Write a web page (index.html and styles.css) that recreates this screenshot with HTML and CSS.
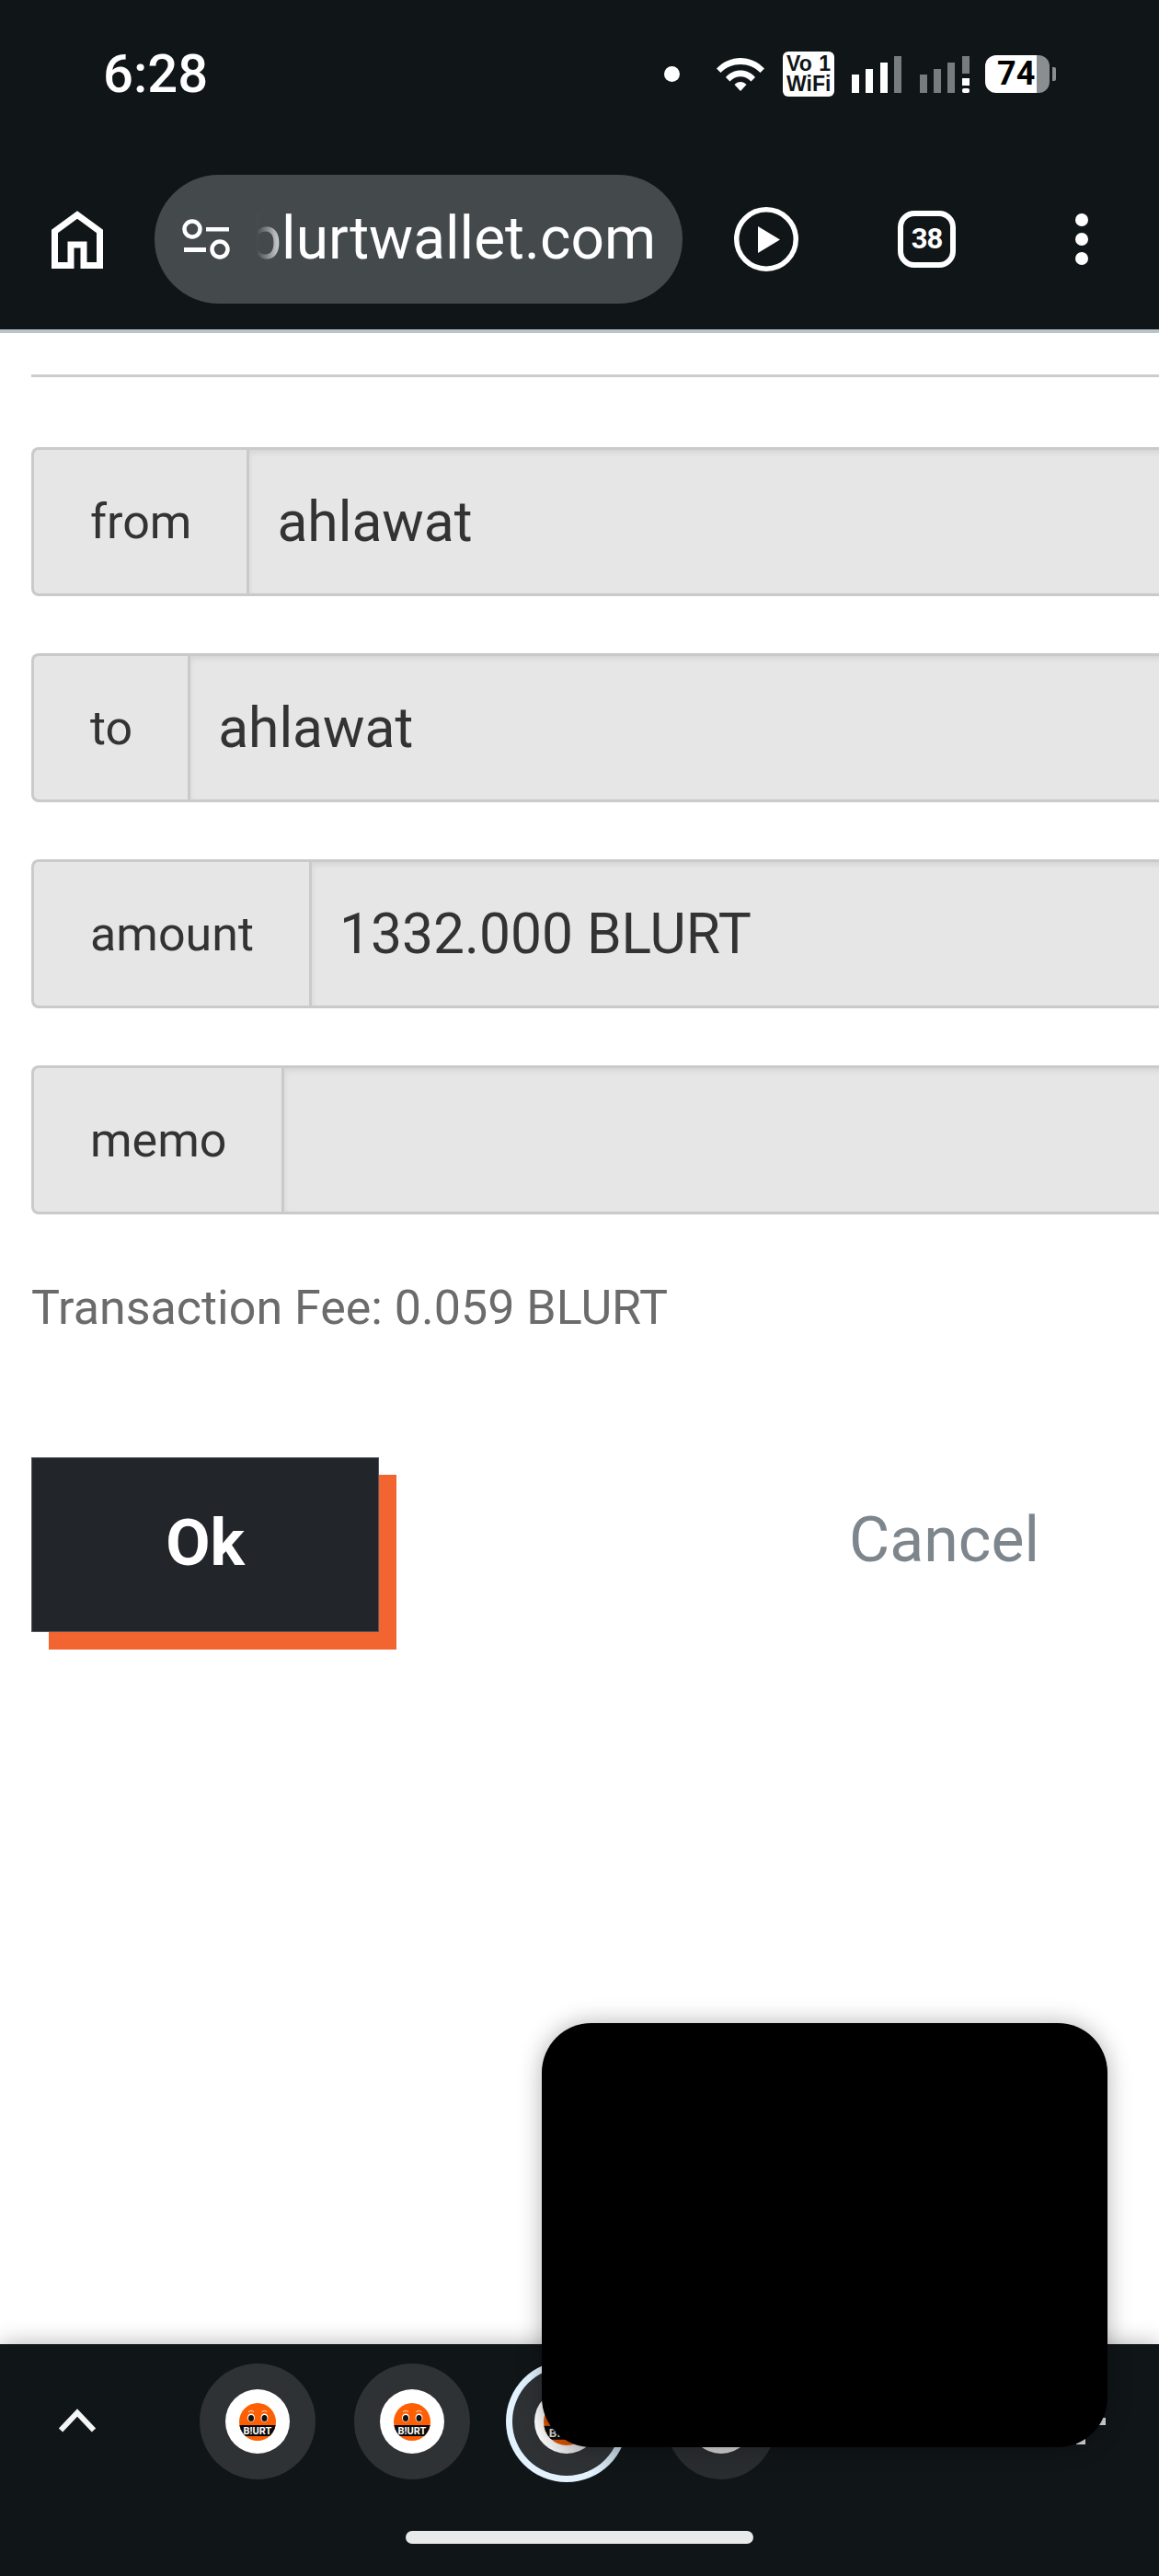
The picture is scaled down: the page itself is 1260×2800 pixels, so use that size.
FILE: index.html
```html
<!DOCTYPE html>
<html lang="en">
<head>
    <meta charset="UTF-8">
    <meta name="viewport" content="width=device-width, initial-scale=1.0">
    <title>Transfer</title>
    <link rel="stylesheet" href="styles.css">
</head>
<body>
<header class="chrome">
    <div class="status-bar">
        <span class="clock">6:28</span>
        <div class="status-icons">
            <span class="notif-dot"></span>
            <svg class="wifi" width="52" height="37" viewBox="0 0 52 37">
                <path d="M0 12.500C14-3 38-3 52 12.500L47.500 17C36 5 16 5 4.500 17Z" fill="#fff"/>
                <path d="M10 22C18 12 34 12 42 22L37.500 26.500C31 19.500 21 19.500 14.500 26.500Z" fill="#fff"/>
                <path d="M19.500 30C23 26 29 26 32.500 30L26 37Z" fill="#fff"/>
            </svg>
            <div class="vowifi">
                <div class="vowifi-top"><span>Vo</span><span>1</span></div>
                <div>WiFi</div>
            </div>
            <svg class="signal" width="54" height="40" viewBox="0 0 54 40">
                <rect x="0" y="20" width="8" height="20" fill="#fff"/>
                <rect x="15" y="14" width="8" height="26" fill="#fff"/>
                <rect x="31" y="7" width="8" height="33" fill="#fff"/>
                <rect x="46" y="0" width="8" height="40" fill="#777c7e"/>
            </svg>
            <svg class="signal-two" width="54" height="40" viewBox="0 0 54 40">
                <rect x="0" y="20" width="8" height="20" fill="#777c7e"/>
                <rect x="15" y="14" width="8" height="26" fill="#777c7e"/>
                <rect x="30" y="7" width="8" height="33" fill="#777c7e"/>
                <rect x="46" y="0" width="8" height="19" fill="#777c7e"/>
                <rect x="46" y="24" width="8" height="8" fill="#fff"/>
                <rect x="46" y="35" width="8" height="5" rx="2" fill="#fff"/>
            </svg>
            <div class="battery">
                <div class="battery-body">74</div>
                <span class="battery-nub"></span>
            </div>
        </div>
    </div>
    <div class="toolbar">
        <svg class="home-icon" width="56" height="63" viewBox="0 0 56 63">
            <path d="M3.500 59.500V22.500L28 4.500L52.500 22.500V59.500H35V37H21V59.500Z" fill="none" stroke="#fff" stroke-width="7"/>
        </svg>
        <div class="omnibox">
            <svg class="tune-icon" width="52" height="44" viewBox="0 0 52 44">
                <circle cx="11" cy="11" r="8.500" fill="none" stroke="#fff" stroke-width="4.500"/>
                <rect x="26" y="9" width="25" height="4.500" fill="#fff"/>
                <rect x="2" y="31" width="24" height="5" fill="#fff"/>
                <circle cx="41" cy="33" r="8.500" fill="none" stroke="#fff" stroke-width="4.500"/>
            </svg>
            <div class="url"><span>blurtwallet.com</span></div>
        </div>
        <svg class="play-icon" width="70" height="70" viewBox="0 0 70 70">
            <circle cx="35" cy="35" r="32.250" fill="none" stroke="#fff" stroke-width="5.500"/>
            <path d="M26 21L50 35.500L26 50Z" fill="#fff"/>
        </svg>
        <div class="tab-count">38</div>
        <div class="menu-dots"><span></span><span></span><span></span></div>
    </div>
</header>

<main class="content">
    <hr class="rule">
    <div class="input-group"><span class="group-label">from</span><input class="group-field" value="ahlawat" disabled></div>
    <div class="input-group"><span class="group-label">to</span><input class="group-field" value="ahlawat" disabled></div>
    <div class="input-group"><span class="group-label">amount</span><input class="group-field" value="1332.000 BLURT" disabled></div>
    <div class="input-group"><span class="group-label">memo</span><input class="group-field" value="" disabled></div>
    <p class="fee">Transaction Fee: 0.059 BLURT</p>
    <div class="actions">
        <button class="btn-ok">Ok</button>
        <a class="btn-cancel">Cancel</a>
    </div>
</main>

<footer class="tabs-bar">
    <div class="bubbles">
        <div class="chevron-box">
            <svg width="42" height="26" viewBox="0 0 42 26">
                <path d="M3 23.500L21 4.500L39 23.500" fill="none" stroke="#f4f5f5" stroke-width="6"/>
            </svg>
        </div>
        <div class="bubble-cell">
            <div class="bubble">
                <div class="bubble-inner">
                    <svg class="logo" width="40" height="41" viewBox="0 0 40 41">
                        <rect width="40" height="41" fill="#ff5f03"/>
                        <rect y="24" width="40" height="12" fill="#0a0a0a"/>
                        <ellipse cx="13" cy="16" rx="4" ry="4.500" fill="#fff"/>
                        <ellipse cx="27.500" cy="16" rx="4" ry="4.500" fill="#fff"/>
                        <ellipse cx="13" cy="16.500" rx="3" ry="3.500" fill="#111"/>
                        <ellipse cx="27.500" cy="16.500" rx="3" ry="3.500" fill="#111"/>
                        <path d="M10 9.500q3-2.500 6 0M24.500 9.500q3-2.500 6 0" fill="none" stroke="#ffd9bd" stroke-width="1"/>
                        <text x="20" y="34" text-anchor="middle" class="logo-text">B!URT</text>
                    </svg>
                </div>
            </div>
        </div>
        <div class="bubble-cell">
            <div class="bubble">
                <div class="bubble-inner">
                    <svg class="logo" width="40" height="41" viewBox="0 0 40 41">
                        <rect width="40" height="41" fill="#ff5f03"/>
                        <rect y="24" width="40" height="12" fill="#0a0a0a"/>
                        <ellipse cx="13" cy="16" rx="4" ry="4.500" fill="#fff"/>
                        <ellipse cx="27.500" cy="16" rx="4" ry="4.500" fill="#fff"/>
                        <ellipse cx="13" cy="16.500" rx="3" ry="3.500" fill="#111"/>
                        <ellipse cx="27.500" cy="16.500" rx="3" ry="3.500" fill="#111"/>
                        <path d="M10 9.500q3-2.500 6 0M24.500 9.500q3-2.500 6 0" fill="none" stroke="#ffd9bd" stroke-width="1"/>
                        <text x="20" y="34" text-anchor="middle" class="logo-text">B!URT</text>
                    </svg>
                </div>
            </div>
        </div>
        <div class="bubble-cell">
            <div class="bubble bubble-active">
                <div class="bubble-inner inner-faded">
                    <svg class="logo logo-big" width="50" height="51" viewBox="0 0 40 41">
                        <rect width="40" height="41" fill="#ff5f03"/>
                        <rect y="24" width="40" height="12" fill="#0a0a0a"/>
                        <text x="20" y="34" text-anchor="middle" class="logo-text">B!URT</text>
                    </svg>
                </div>
            </div>
        </div>
        <div class="bubble-cell">
            <div class="bubble bubble-last"><div class="bubble-inner inner-grey"></div></div>
        </div>
    </div>
    <div class="gesture-pill"></div>
</footer>

<span class="pip-mark mark-one"></span>
<span class="pip-mark mark-two"></span>
<div class="pip-window"></div>
</body>
</html>
```

FILE: styles.css
```css
* { box-sizing: border-box; }
html, body { margin: 0; padding: 0; }
body {
    width: 1260px;
    height: 2800px;
    overflow: hidden;
    position: relative;
    display: flex;
    flex-direction: column;
    font-family: Roboto, 'Liberation Sans', sans-serif;
    background-color: #ffffff;
}

/* Browser chrome */
.chrome { height: 362px; background-color: #101518; border-bottom: 4px solid #b9c3ca; flex-shrink: 0; }
.status-bar { height: 190px; display: flex; position: relative; color: #fff; }
.clock { margin: 47px 0 0 112px; font-size: 58px; font-weight: 500; line-height: 66px; }
.status-icons { display: flex; align-items: flex-start; margin-left: auto; padding-right: 112px; }
.notif-dot { width: 17px; height: 17px; margin-top: 72px; border-radius: 50%; background-color: #fff; }
.wifi { margin: 62px 0 0 40px; }
.vowifi {
    width: 56px;
    height: 49px;
    margin: 56px 0 0 20px;
    padding: 2px 4px 0;
    background-color: #fff;
    border-radius: 6px;
    color: #101518;
    font-family: 'Liberation Sans Narrow', 'Liberation Sans', sans-serif;
    font-size: 23px;
    font-weight: 700;
    line-height: 22px;
}
.vowifi-top { display: flex; justify-content: space-between; }
.signal { margin: 61px 0 0 19px; }
.signal-two { margin: 61px 0 0 20px; }
.battery { display: flex; align-items: center; margin: 60px 0 0 17px; }
.battery-body {
    width: 70px;
    height: 41px;
    padding-left: 13px;
    border-radius: 12px;
    background: linear-gradient(to right, #fff 56px, #8a8e90 56px);
    color: #000;
    font-family: 'Liberation Sans Narrow', Roboto, sans-serif;
    font-size: 36px;
    font-weight: 700;
    line-height: 41px;
}
.battery-nub { width: 4px; height: 15px; margin-left: 3px; border-radius: 0 2px 2px 0; background-color: #8a8e90; }

.toolbar { display: flex; align-items: center; height: 140px; position: relative; }
.home-icon { margin-left: 56px; }
.omnibox {
    width: 574px;
    height: 140px;
    margin-left: 56px;
    display: flex;
    align-items: center;
    background-color: #44494c;
    border-radius: 70px;
    color: #fff;
}
.tune-icon { margin-left: 30px; flex-shrink: 0; }
.url {
    width: 447px;
    margin-left: 16px;
    display: flex;
    justify-content: flex-end;
    white-space: nowrap;
    font-size: 64px;
    line-height: 80px;
    -webkit-mask-image: linear-gradient(to right, transparent 13px, #000 46px);
    mask-image: linear-gradient(to right, transparent 13px, #000 46px);
}
.play-icon { margin-left: 56px; }
.tab-count {
    width: 63px;
    height: 62px;
    margin-left: 108px;
    border: 6px solid #fff;
    border-radius: 18px;
    color: #fff;
    font-size: 31px;
    font-weight: 700;
    letter-spacing: -1px;
    line-height: 50px;
    text-align: center;
}
.menu-dots { display: flex; flex-direction: column; gap: 7px; margin-left: 130px; }
.menu-dots span { width: 14px; height: 14px; border-radius: 50%; background-color: #fff; }

/* Page */
.content { flex: 1; padding: 45px 0 0 34px; overflow: hidden; }
.rule { width: 1300px; height: 3px; margin: 0 0 76px; border: none; background-color: #cccccc; }
.input-group {
    display: flex;
    width: 1400px;
    height: 162px;
    margin-bottom: 62px;
}
.group-label {
    display: flex;
    align-items: center;
    padding: 0 60px 0 61px;
    background-color: #e6e6e6;
    border: 3px solid #cacaca;
    border-right: none;
    border-radius: 8px 0 0 8px;
    color: #333333;
    font-size: 52px;
}
.group-field {
    flex: 1;
    min-width: 0;
    padding: 0 0 0 30px;
    background-color: #e6e6e6;
    border: 3px solid #cacaca;
    box-shadow: inset 0 3px 6px rgba(0,0,0,0.08);
    color: #333333;
    opacity: 1;
    font-family: Roboto, sans-serif;
    font-size: 60.5px;
    -webkit-text-fill-color: #333333;
}
.fee { margin: 67px 0 0; color: #6b6b6b; font-size: 52px; line-height: 70px; }
.actions { display: flex; align-items: flex-start; margin-top: 127px; }
.btn-ok {
    width: 378px;
    height: 190px;
    padding: 0 0 4px;
    background-color: #22252a;
    border: 1px solid #55585c;
    box-shadow: 19px 19px 0 #f26530;
    color: #ffffff;
    font-family: Roboto, sans-serif;
    font-size: 70px;
    font-weight: 700;
}
.btn-cancel {
    margin: 51px 0 0 511px;
    color: #7e868d;
    font-size: 68px;
    line-height: 78px;
}

/* Bottom tab strip */
.tabs-bar {
    height: 252px;
    flex-shrink: 0;
    padding-top: 21px;
    background-color: #101518;
    box-shadow: 0 0 24px rgba(0,0,0,0.3);
}
.bubbles { display: flex; height: 126px; }
.chevron-box { width: 196px; padding: 49px 0 0 63px; }
.chevron-box svg { display: block; }
.bubble-cell { width: 168px; display: flex; justify-content: center; }
.bubble {
    width: 126px;
    height: 126px;
    display: flex;
    align-items: center;
    justify-content: center;
    border-radius: 50%;
    background-color: #2e3235;
    flex-shrink: 0;
}
.bubble-active {
    width: 132px;
    height: 132px;
    margin-top: -3px;
    border: 7px solid transparent;
    background: linear-gradient(#2e3235, #2e3235) padding-box,
                linear-gradient(to right, #e2f3ff 70%, #b5c5d0) border-box;
}
.bubble-last { width: 120px; background-color: #2a2d30; }
.bubble-inner {
    width: 70px;
    height: 70px;
    display: flex;
    align-items: center;
    justify-content: center;
    border-radius: 50%;
    background-color: #ffffff;
}
.inner-faded { background: linear-gradient(to right, #fff, #c9c9c9); }
.inner-grey { background-color: #cfcfcf; }
.logo { border-radius: 50%; }
.logo-text { font-family: Roboto, sans-serif; font-size: 11px; font-weight: 700; fill: #fff; }
.logo-big { filter: brightness(0.85); }
.gesture-pill { width: 378px; height: 14px; margin: 56px auto 0; border-radius: 7px; background-color: #e8eaea; }

/* Floating picture-in-picture window */
.pip-window {
    position: absolute;
    left: 589px;
    top: 2199px;
    width: 615px;
    height: 461px;
    border-radius: 54px;
    background-color: #000;
    box-shadow: 0 0 26px rgba(0,0,0,0.3);
}
.pip-mark { position: absolute; background-color: #d9d9d9; }
.mark-one { left: 1190px; top: 2628px; width: 12px; height: 8px; }
.mark-two { left: 1170px; top: 2646px; width: 10px; height: 11px; }
```
